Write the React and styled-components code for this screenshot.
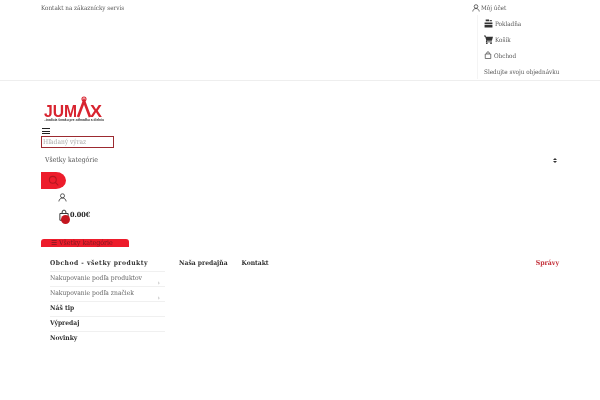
import styled, { createGlobalStyle } from "styled-components";

const GlobalStyle = createGlobalStyle`
  html, body {
    margin: 0;
    padding: 0;
    background: #fff;
  }

  body {
    font-family: "DejaVu Serif Condensed", "DejaVu Serif", serif;
    font-size: 6.300px;
    color: #555;
  }

  #root {
    will-change: transform;
  }
`;

const accountLinks = [
  { label: "Pokladňa", icon: <CashIcon /> },
  { label: "Košík", icon: <CartIcon /> },
  { label: "Obchod", icon: <BagIcon /> },
  { label: "Sledujte svoju objednávku" },
];

const categories = [
  { label: "Obchod - všetky produkty", strong: true, lead: true },
  { label: "Nakupovanie podľa produktov", more: true },
  { label: "Nakupovanie podľa značiek", more: true },
  { label: "Náš tip", strong: true },
  { label: "Výpredaj", strong: true },
  { label: "Novinky", strong: true },
];

function UserIcon({ size = 8 }) {
  return (
    <svg width={size} height={size} viewBox="0 0 16 16" fill="none" stroke="#333" strokeWidth="1.400">
      <circle cx="8" cy="5" r="3.600" />
      <path d="M1.500 15c.6-4 3-6 6.500-6s5.900 2 6.500 6" />
    </svg>
  );
}

function CashIcon() {
  return (
    <svg width="9" height="9" viewBox="0 0 16 16" fill="#333">
      <path d="M3 1h6v3H3zM1 6h14v3H1zM1 10h14v5H1z" />
      <path d="M10 2h4v2h-4z" />
    </svg>
  );
}

function CartIcon() {
  return (
    <svg width="9" height="9" viewBox="0 0 16 16" fill="#333">
      <path d="M0 1h3l.6 2H16l-2 7H5.500l-.3 1.500H14V13H3.200l.8-3.500L2 2.500H0z" />
      <circle cx="5" cy="14.500" r="1.500" />
      <circle cx="12.500" cy="14.500" r="1.500" />
    </svg>
  );
}

function BagIcon({ size = 8, color = "#333" }) {
  return (
    <svg width={size} height={size} viewBox="0 0 16 16" fill="none" stroke={color} strokeWidth="1.300">
      <path d="M2.500 6h11v9h-11z" />
      <path d="M5.500 6V4a2.500 2.500 0 0 1 5 0v2" />
    </svg>
  );
}

function Logo() {
  return (
    <LogoBox width="62" height="28" viewBox="0 0 62 28">
      <text x="1" y="22" fontFamily="Liberation Sans, sans-serif" fontSize="16.500" fontWeight="700" fill="#d8232f" textLength="33" lengthAdjust="spacingAndGlyphs">
        JUM
      </text>
      <path d="M35 22 L41 6 L47 22" fill="none" stroke="#d8232f" strokeWidth="2.600" />
      <circle cx="41" cy="4" r="2" fill="none" stroke="#d8232f" strokeWidth="1.100" />
      <text x="47" y="22" fontFamily="Liberation Sans, sans-serif" fontSize="16.500" fontWeight="700" fill="#d8232f" textLength="12" lengthAdjust="spacingAndGlyphs">
        X
      </text>
      <text x="1" y="26" fontFamily="Liberation Sans, sans-serif" fontSize="3.100" fontWeight="700" fill="#333" textLength="60" lengthAdjust="spacingAndGlyphs">
        ..tradícia šmaku pre záhradku a dielniu
      </text>
    </LogoBox>
  );
}

export default function App() {
  return (
    <>
      <GlobalStyle />
      <TopBar>
        <ServiceLink>Kontakt na zákaznícky servis</ServiceLink>
        <AccountColumn>
          <AccountTitle>
            <UserIcon />
            Môj účet
          </AccountTitle>
          <AccountList>
            {accountLinks.map((link) => (
              <AccountItem key={link.label}>
                {link.icon}
                {link.label}
              </AccountItem>
            ))}
          </AccountList>
        </AccountColumn>
      </TopBar>

      <Header>
        <Logo />
        <Burger>
          <span />
          <span />
          <span />
        </Burger>
        <SearchInput placeholder="Hľadaný výraz" readOnly />
        <CategorySelect>
          Všetky kategórie
          <SelectArrows>
            <i />
            <b />
          </SelectArrows>
        </CategorySelect>
        <SearchButton>
          <svg width="11" height="11" viewBox="0 0 16 16" fill="none" stroke="#b3161f" strokeWidth="1.500">
            <circle cx="7" cy="7" r="5" />
            <path d="M11 11l4 4" />
          </svg>
        </SearchButton>
        <UserRow>
          <UserIcon size={9} />
        </UserRow>
        <CartRow>
          <CartIcons>
            <BagIcon size={12} />
            <CartBadge />
          </CartIcons>
          0.00€
        </CartRow>
      </Header>

      <MenuToggle>☰ Všetky kategórie</MenuToggle>

      <Navigation>
        <CategoryList>
          {categories.map((item) => (
            <CategoryItem key={item.label} $strong={item.strong} $lead={item.lead}>
              {item.label}
              {item.more && <Chevron>›</Chevron>}
            </CategoryItem>
          ))}
        </CategoryList>
        <MainLink>Naša predajňa</MainLink>
        <MainLink>Kontakt</MainLink>
        <NewsLink>Správy</NewsLink>
      </Navigation>
    </>
  );
}

const TopBar = styled.div`
  height: 80px;
  padding: 0 41px;
  border-bottom: 1px solid #eee;

  display: flex;
  justify-content: space-between;
`;

const ServiceLink = styled.div`
  padding-top: 3px;
  line-height: 9px;
`;

const AccountColumn = styled.div`
  width: 87px;
  padding-top: 3px;
`;

const AccountTitle = styled.div`
  display: flex;
  align-items: center;
  gap: 1px;
  height: 9px;
`;

const AccountList = styled.div`
  margin: 3px 0 0 5px;
  padding-left: 6px;
  border-left: 1px solid #f4f4f4;
`;

const AccountItem = styled.div`
  height: 16px;

  display: flex;
  align-items: center;
  gap: 2px;
  white-space: nowrap;
`;

const Header = styled.div`
  padding: 14px 41px 0;
`;

const LogoBox = styled.svg`
  display: block;
  margin-left: 2px;
`;

const Burger = styled.div`
  width: 8px;
  height: 6px;
  margin: 5px 0 0 1px;

  display: flex;
  flex-direction: column;
  justify-content: space-between;

  span {
    display: block;
    height: 1px;
    background: #222;
  }
`;

const SearchInput = styled.input`
  display: block;
  box-sizing: border-box;
  width: 73px;
  height: 12px;
  margin-top: 2px;
  padding: 0 1px;

  border: 1.500px solid #9c2a30;
  background: #fff;
  outline: 0;

  font-family: "DejaVu Serif Condensed", "DejaVu Serif", serif;
  font-size: 6.600px;

  &::placeholder {
    color: #aaa;
    opacity: 1;
  }
`;

const CategorySelect = styled.div`
  box-sizing: border-box;
  height: 24px;
  padding: 0 2px 0 4px;

  display: flex;
  align-items: center;
  justify-content: space-between;

  font-size: 6.900px;
`;

const SelectArrows = styled.div`
  display: flex;
  flex-direction: column;
  gap: 1px;

  i,
  b {
    display: block;
    width: 0;
    height: 0;
    border-left: 2px solid transparent;
    border-right: 2px solid transparent;
  }

  i {
    border-bottom: 2px solid #333;
  }

  b {
    border-top: 2px solid #333;
  }
`;

const SearchButton = styled.div`
  width: 25px;
  height: 17px;

  display: flex;
  align-items: center;
  justify-content: center;

  background: #ed1c2b;
  border-radius: 0 10px 10px 0 / 0 50% 50% 0;
`;

const UserRow = styled.div`
  height: 9px;
  margin: 4px 0 0 17px;
`;

const CartRow = styled.div`
  height: 12px;
  margin: 9px 0 0 17px;

  display: flex;
  align-items: flex-start;

  color: #222;
  font-size: 7.200px;
  font-weight: 700;
  line-height: 7px;
`;

const CartIcons = styled.div`
  position: relative;
  width: 12px;
  height: 12px;
  margin-top: -2px;
`;

const CartBadge = styled.span`
  position: absolute;
  left: 3px;
  top: 6px;
  width: 9px;
  height: 9px;
  border-radius: 50%;
  background: #c4161f;
`;

const MenuToggle = styled.div`
  box-sizing: border-box;
  width: 88px;
  height: 8px;
  margin: 16px 0 0 41px;
  padding-left: 10px;

  background: #ed1c2b;
  border-radius: 3px 3px 0 0;

  color: #7a1a20;
  font-size: 7px;
  line-height: 8px;
  white-space: nowrap;
`;

const Navigation = styled.div`
  padding: 10px 41px 0;

  display: flex;
  align-items: flex-start;
`;

const CategoryList = styled.div`
  width: 115px;
  margin-left: 9px;
`;

const CategoryItem = styled.div`
  position: relative;
  box-sizing: border-box;
  height: 15px;
  border-bottom: 1px solid #f0f0f0;

  color: ${({ $strong }) => ($strong ? "#333" : "#666")};
  font-size: 6.700px;
  font-weight: ${({ $strong }) => ($strong ? 700 : 400)};
  letter-spacing: ${({ $lead }) => ($lead ? "0.5px" : "0")};
  line-height: 13px;
  white-space: nowrap;

  &:last-child {
    border-bottom: 0;
  }
`;

const Chevron = styled.span`
  position: absolute;
  right: 5px;
  top: 5px;
  color: #999;
`;

const MainLink = styled.div`
  margin-left: 14px;
  color: #333;
  font-size: 6.700px;
  font-weight: 700;
  line-height: 13px;
`;

const NewsLink = styled.div`
  margin-left: auto;
  color: #c4343d;
  font-size: 6.900px;
  font-weight: 700;
  line-height: 13px;
`;
